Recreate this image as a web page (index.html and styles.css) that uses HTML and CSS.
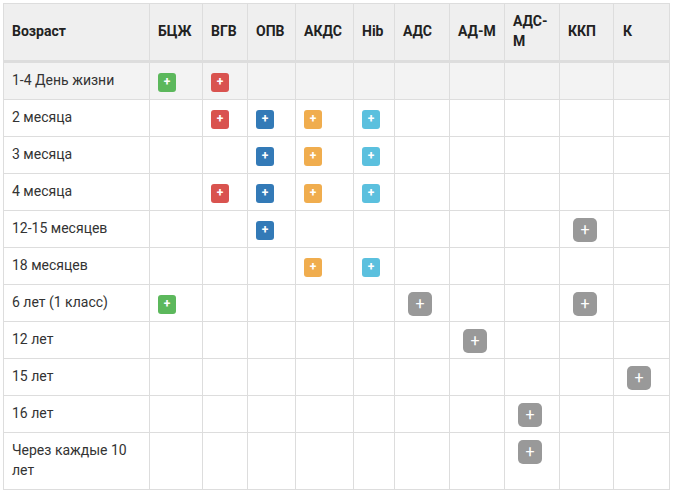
FILE: index.html
```html
<!DOCTYPE html>
<html>
<head lang="ru">
    <meta charset="UTF-8">
    <title>Календарь прививок</title>
    <link rel="stylesheet" href="styles.css">
</head>
<body>
<table class="schedule">
    <colgroup>
        <col class="col-age">
        <col class="col-bcg">
        <col class="col-hepb">
        <col class="col-opv">
        <col class="col-akds">
        <col class="col-hib">
        <col class="col-ads">
        <col class="col-adm">
        <col class="col-adsm">
        <col class="col-kkp">
        <col class="col-k">
    </colgroup>
    <thead>
        <tr>
            <th>Возраст</th>
            <th>БЦЖ</th>
            <th>ВГВ</th>
            <th>ОПВ</th>
            <th>АКДС</th>
            <th>Hib</th>
            <th>АДС</th>
            <th>АД-М</th>
            <th>АДС-М</th>
            <th>ККП</th>
            <th class="last-head">К</th>
        </tr>
    </thead>
    <tbody>
        <tr class="striped">
            <td>1-4 День жизни</td>
            <td><span class="dose green">+</span></td>
            <td><span class="dose red">+</span></td>
            <td></td><td></td><td></td><td></td><td></td><td></td><td></td><td></td>
        </tr>
        <tr>
            <td>2 месяца</td>
            <td></td>
            <td><span class="dose red">+</span></td>
            <td><span class="dose blue">+</span></td>
            <td><span class="dose orange">+</span></td>
            <td><span class="dose cyan">+</span></td>
            <td></td><td></td><td></td><td></td><td></td>
        </tr>
        <tr>
            <td>3 месяца</td>
            <td></td>
            <td></td>
            <td><span class="dose blue">+</span></td>
            <td><span class="dose orange">+</span></td>
            <td><span class="dose cyan">+</span></td>
            <td></td><td></td><td></td><td></td><td></td>
        </tr>
        <tr>
            <td>4 месяца</td>
            <td></td>
            <td><span class="dose red">+</span></td>
            <td><span class="dose blue">+</span></td>
            <td><span class="dose orange">+</span></td>
            <td><span class="dose cyan">+</span></td>
            <td></td><td></td><td></td><td></td><td></td>
        </tr>
        <tr>
            <td>12-15 месяцев</td>
            <td></td>
            <td></td>
            <td><span class="dose blue">+</span></td>
            <td></td><td></td><td></td><td></td><td></td>
            <td><span class="dose big">+</span></td>
            <td></td>
        </tr>
        <tr>
            <td>18 месяцев</td>
            <td></td><td></td><td></td>
            <td><span class="dose orange">+</span></td>
            <td><span class="dose cyan">+</span></td>
            <td></td><td></td><td></td><td></td><td></td>
        </tr>
        <tr>
            <td>6 лет (1 класс)</td>
            <td><span class="dose green">+</span></td>
            <td></td><td></td><td></td><td></td>
            <td><span class="dose big">+</span></td>
            <td></td><td></td>
            <td><span class="dose big">+</span></td>
            <td></td>
        </tr>
        <tr>
            <td>12 лет</td>
            <td></td><td></td><td></td><td></td><td></td><td></td>
            <td><span class="dose big">+</span></td>
            <td></td><td></td><td></td>
        </tr>
        <tr>
            <td>15 лет</td>
            <td></td><td></td><td></td><td></td><td></td><td></td><td></td><td></td><td></td>
            <td><span class="dose big">+</span></td>
        </tr>
        <tr>
            <td>16 лет</td>
            <td></td><td></td><td></td><td></td><td></td><td></td><td></td>
            <td><span class="dose big">+</span></td>
            <td></td><td></td>
        </tr>
        <tr>
            <td>Через каждые 10 лет</td>
            <td></td><td></td><td></td><td></td><td></td><td></td><td></td>
            <td><span class="dose big">+</span></td>
            <td></td><td></td>
        </tr>
    </tbody>
</table>
</body>
</html>
```

FILE: styles.css
```css
body{
    margin: 0;
    padding: 3px 4px 4px 3px;
    background: #fff;
    font-family: Roboto, "Liberation Sans", sans-serif;
    font-size: 14px;
    line-height: 20px;
    color: #333;
}
.schedule{
    width: 667px;
    table-layout: fixed;
    border-collapse: collapse;
    border-spacing: 0;
}
.schedule th,.schedule td{
    padding: 7px 8px 9px;
    border: 1px solid #ddd;
    text-align: left;
    vertical-align: top;
}
.schedule th{
    vertical-align: middle;
    border-bottom-width: 3px;
    background: #efefef;
    font-weight: 700;
    color: #222;
}
.schedule .last-head{
    padding-left: 9px;
}
.striped td{
    background: #f3f3f3;
}
.col-age{width: 146px;}
.col-bcg{width: 53px;}
.col-hepb{width: 45px;}
.col-opv{width: 48px;}
.col-akds{width: 58px;}
.col-hib{width: 41px;}
.col-ads,.col-adm,.col-adsm{width: 55px;}
.col-kkp{width: 54px;}
.col-k{width: 56px;}
.dose{
    display: flex;
    align-items: center;
    justify-content: center;
    width: 18px;
    height: 19px;
    margin: 3px 0 -2px;
    border-radius: 3px;
    font-size: 12px;
    font-weight: 700;
    line-height: 19px;
    color: #fff;
}
.green{background: #5cb85c;}
.red{background: #d9534f;}
.blue{background: #337ab7;}
.orange{background: #f0ad4e;}
.cyan{background: #5bc0de;}
.big{
    width: 24px;
    height: 24px;
    margin: 0 0 -4px 5px;
    border-radius: 5px;
    background: #999;
    font-size: 16px;
    font-weight: 400;
    line-height: 24px;
}
```
